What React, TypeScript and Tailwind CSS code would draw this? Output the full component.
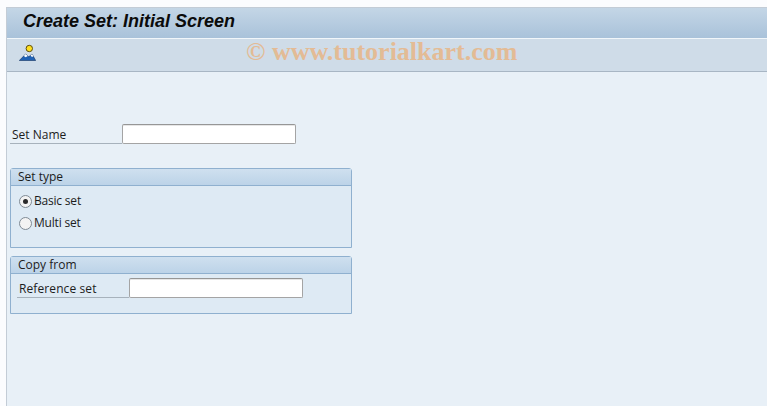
const label = "text-[12px] leading-none text-[#1c1c1c] font-['Open_Sans',sans-serif]";

function TextField({ width }: { width: string }) {
  return (
    <div className={`${width} h-[20px] bg-white border border-[#a4a4a4] border-t-[#969696] rounded-[2px] shadow-[inset_0_1px_0_#e6e6e6]`} />
  );
}

function Radio({ checked, text }: { checked?: boolean; text: string }) {
  return (
    <div className="flex items-center h-[22px]">
      <span className="w-[13px] h-[13px] rounded-full border border-[#7f8a94] bg-[#f3f3f3] flex items-center justify-center">
        {checked && <span className="w-[5px] h-[5px] rounded-full bg-[#2a2a2a]" />}
      </span>
      <span className={`${label} ml-[2px] tracking-[-0.2px]`}>{text}</span>
    </div>
  );
}

function Group({ title, height, children }: { title: string; height: string; children: React.ReactNode }) {
  return (
    <section className={`w-[342px] ${height} border border-[#8fb0cf] rounded-t-[3px] bg-[#deeaf4]`}>
      <div className="h-[17px] bg-gradient-to-b from-[#cfe0ef] to-[#bcd3e8] border-b border-[#8fb0cf] pl-[7px] flex items-center">
        <span className={label}>{title}</span>
      </div>
      {children}
    </section>
  );
}

export default function App() {
  return (
    <div className="relative w-[767px] h-[406px] bg-[#fbfcfe] pt-[7px] pl-[6px] overflow-hidden">
      <div className="h-[399px] border-l border-[#c3ccd6] border-t bg-[#e8f0f7] flex flex-col">
        <header className="h-[31px] bg-gradient-to-b from-[#c4d6e6] to-[#a9c2da] border-b border-[#f1f6fa] pl-[16px] flex items-center">
          <h1 className="text-[18px] leading-none mb-[4px] font-bold italic text-[#0b0b0b] font-['Liberation_Sans',sans-serif]">
            Create Set: Initial Screen
          </h1>
        </header>
        <div className="h-[33px] bg-[#cfdce8] border-b border-[#a8b6c4] pl-[12px] flex items-start">
          <svg className="mt-[5px]" width="17" height="17" viewBox="0 0 17 17">
            <circle cx="10.3" cy="4.5" r="3.2" fill="#ffdf20" stroke="#5c4d10" strokeWidth="1" />
            <path d="M0.3 16.5 L6.7 10 L9.8 12.8 L13 10 L16.7 16.5 Z" fill="#1f62b5" stroke="#12305e" strokeWidth="0.6" />
            <path d="M4.8 12 L6.7 10 L8.8 12 L6.7 13.2 Z M11.5 11.4 L13 10 L14.4 12.2 L13 13 Z" fill="#ffffff" />
          </svg>
        </div>

        <main className="pl-[3px]">
          <div className="mt-[52px] flex items-end">
            <div className="w-[112px] h-[20px] border-b border-[#a7b2bc] pl-[2px] pt-[2px] flex items-center">
              <span className={label}>Set Name</span>
            </div>
            <TextField width="w-[174px]" />
          </div>

          <div className="mt-[24px]">
            <Group title="Set type" height="h-[80px]">
              <div className="pl-[8px] pt-[4px]">
                <Radio checked text="Basic set" />
                <Radio text="Multi set" />
              </div>
            </Group>
          </div>

          <div className="mt-[8px]">
            <Group title="Copy from" height="h-[58px]">
              <div className="pl-[6px] pt-[4px] flex items-end">
                <div className="w-[112px] h-[20px] border-b border-[#a7b2bc] pl-[2px] pt-[2px] flex items-center">
                  <span className={`${label} tracking-[0.1px]`}>Reference set</span>
                </div>
                <TextField width="w-[174px]" />
              </div>
            </Group>
          </div>
        </main>
      </div>

      {/* watermark sits over the toolbar */}
      <div className="absolute left-[246px] top-[39px] text-[26px] leading-[26px] font-bold text-[#e3bb95] font-['Liberation_Serif',serif] whitespace-nowrap">
        © www.tutorialkart.com
      </div>
    </div>
  );
}
